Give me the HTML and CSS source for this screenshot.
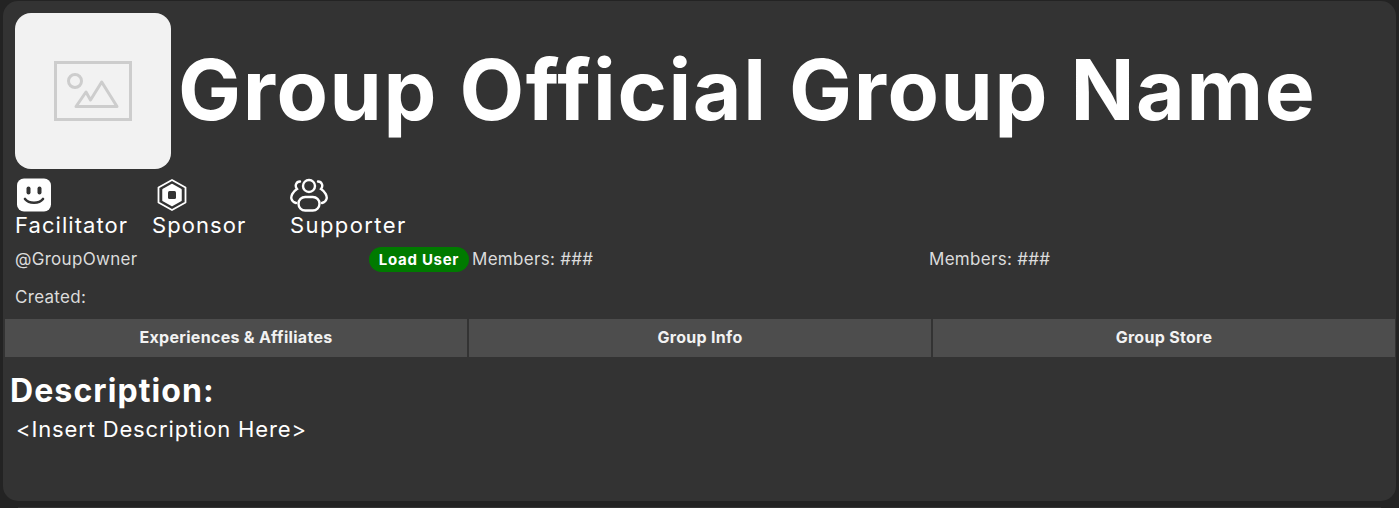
FILE: index.html
```html
<!DOCTYPE html>
<html lang="en">
<head>
  <meta charset="UTF-8" />
  <title>Group Official Group Name</title>
  <link rel="stylesheet" href="styles.css">
</head>
<body>
  <div class="card">
    <div class="header">
      <div class="avatar">
        <svg width="156" height="156" viewBox="0 0 156 156" fill="none" stroke="#cdcdcd" stroke-width="3">
          <rect x="40.5" y="49.5" width="75" height="57"/>
          <circle cx="60" cy="68" r="6.5"/>
          <path d="M61 93.500 71 79 75.500 87 86.700 69 102 93.500Z" stroke-linejoin="round"/>
        </svg>
      </div>
      <h1>Group Official Group Name</h1>
    </div>

    <div class="badges">
      <div class="badge badge-facilitator">
        <svg width="34" height="33" viewBox="0 0 34 33">
          <rect width="34" height="33" rx="7" fill="#fff"/>
          <rect x="9.500" y="8" width="4" height="8" rx="2" fill="#333"/>
          <rect x="20.500" y="8" width="4" height="8" rx="2" fill="#333"/>
          <path d="M8 20.500C12 25.500 22 25.500 26 20.500" fill="none" stroke="#333" stroke-width="2.600" stroke-linecap="round"/>
        </svg>
        <span>Facilitator</span>
      </div>
      <div class="badge badge-sponsor">
        <svg width="30" height="33" viewBox="0 0 30 33" fill="none">
          <path d="M15 1.500 28.500 9V24L15 31.500 1.500 24V9Z" stroke="#fff" stroke-width="1.800" stroke-linejoin="round"/>
          <path d="M15 6.500 23.500 11.300V21.700L15 26.500 6.500 21.700V11.300Z" fill="#fff" stroke="#fff" stroke-width="2.500" stroke-linejoin="round"/>
          <rect x="11" y="12.500" width="8" height="8" rx="1.500" fill="#333"/>
        </svg>
        <span>Sponsor</span>
      </div>
      <div class="badge badge-supporter">
        <svg width="38" height="34" viewBox="0 0 38 34" fill="none" stroke="#fff" stroke-width="2.400" stroke-linecap="round">
          <circle cx="19" cy="8" r="6"/>
          <rect x="8.500" y="19" width="21" height="13.500" rx="6.700"/>
          <path d="M10 3.500C6 3.500 4.500 8 7 11 3 13.500 .5 18 1.500 21 2.200 23.500 4 24.500 6 25"/>
          <path d="M28 3.500C32 3.500 33.500 8 31 11 35 13.500 37.500 18 36.500 21 35.800 23.500 34 24.500 32 25"/>
        </svg>
        <span>Supporter</span>
      </div>
    </div>

    <div class="stats">
      <div class="owner">
        <span class="muted">@GroupOwner</span>
        <span class="load-user">Load User</span>
      </div>
      <div class="muted">Members: ###</div>
      <div class="muted">Members: ###</div>
    </div>
    <div class="created muted">Created:</div>

    <div class="tabs">
      <div class="tab">Experiences &amp; Affiliates</div>
      <div class="tab">Group Info</div>
      <div class="tab">Group Store</div>
    </div>

    <h2>Description:</h2>
    <p class="description">&lt;Insert Description Here&gt;</p>
  </div>
  <div class="next-card"></div>
</body>
</html>
```

FILE: styles.css
```css
body {
  background: #232323;
  color: #fff;
  font-family: Inter, "Open Sans", sans-serif;
  margin: 0;
  padding: 1px 3px 0;
}
.card {
  background: #333;
  border-radius: 15px;
  height: 500px;
  padding: 12px 1px 0 2px;
  box-sizing: border-box;
}
.next-card {
  background: #333;
  height: 1px;
  margin: 6px 15px 0;
}
.header {
  display: flex;
  align-items: center;
  gap: 7px;
  padding-left: 10px;
}
.avatar {
  width: 156px;
  height: 156px;
  background: #f2f2f2;
  border-radius: 16px;
  flex: none;
}
.avatar svg {
  display: block;
}
h1 {
  margin: 0 0 2px;
  font-size: 84px;
  font-weight: 700;
  line-height: 100px;
  letter-spacing: 1.6px;
  white-space: nowrap;
}
.badges {
  display: flex;
  margin-top: 9px;
  padding-left: 10px;
  height: 62px;
}
.badge {
  display: flex;
  flex-direction: column;
  align-items: flex-start;
  font-size: 22px;
  line-height: 26px;
  letter-spacing: 1.05px;
}
.badge svg {
  display: block;
  height: 34px;
}
.badge-facilitator {
  width: 137px;
}
.badge-facilitator svg {
  margin-left: 2px;
}
.badge-sponsor {
  width: 138px;
}
.badge-sponsor svg {
  margin-left: 5px;
}
.badge-supporter {
  letter-spacing: 1.4px;
}
.stats {
  display: grid;
  grid-template-columns: 457px 457px 1fr;
  align-items: center;
  margin-top: 6px;
  padding-left: 10px;
  font-size: 17px;
  letter-spacing: .3px;
  height: 26px;
}
.owner {
  display: flex;
  justify-content: space-between;
  align-items: center;
  margin-right: 3px;
}
.muted {
  color: #dcdcdc;
}
.load-user {
  background: #007a00;
  color: #fff;
  font-size: 15px;
  font-weight: 700;
  line-height: 25px;
  letter-spacing: .7px;
  width: 100px;
  text-align: center;
  border-radius: 13px;
}
.created {
  font-size: 17px;
  line-height: 22px;
  letter-spacing: .3px;
  margin-top: 1px;
  padding-left: 10px;
  padding-top: 13px;
}
.tabs {
  display: flex;
  gap: 2px;
  margin-top: 11px;
}
.tab {
  flex: 1;
  height: 38px;
  line-height: 37px;
  background: #4d4d4d;
  color: #f2f2f2;
  font-size: 16px;
  font-weight: 700;
  letter-spacing: .3px;
  text-align: center;
}
h2 {
  margin: 15px 0 0 5px;
  font-size: 32px;
  font-weight: 700;
  line-height: 38px;
  letter-spacing: 1.1px;
}
.description {
  margin: 5px 0 0 11px;
  font-size: 22px;
  line-height: 28px;
  letter-spacing: .85px;
}
```
